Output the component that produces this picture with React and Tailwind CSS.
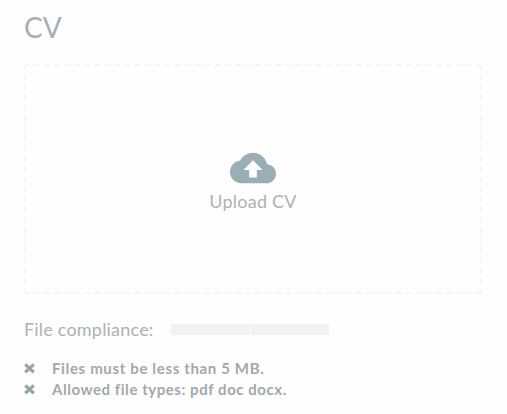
const rules = [
  { text: 'Files must be less than 5 MB.', spacing: 'tracking-[0.65px]' },
  { text: 'Allowed file types: pdf doc docx.', spacing: 'tracking-[0.55px]' },
];

function Cross() {
  return (
    <svg viewBox="0 0 11 11" className="h-[11px] w-[11px] shrink-0" fill="none" stroke="#93a5ad" strokeWidth="3.2">
      <path d="M1.2 1.4 9.8 9.2M9.8 1.4 1.2 9.2" />
    </svg>
  );
}

export default function App() {
  return (
    <main className="h-[414px] w-[507px] overflow-hidden bg-[#fefefe] pl-6 pt-[9px] font-['Lato',sans-serif] text-[#abb2b6]">
      <h1 className="h-[55px] text-[28px] font-normal leading-[36px] tracking-[0.1px] text-[#a7aeb4]">CV</h1>
      <button className="flex h-[230px] w-[458px] flex-col items-center border-2 border-dashed border-[#f5f5f6] pt-[79px]">
        <svg viewBox="0 0 24 24" className="h-[46px] w-[46px]" fill="#9badb5">
          <path d="M19.35 10.04C18.67 6.59 15.64 4 12 4 9.11 4 6.6 5.64 5.35 8.04 2.34 8.36 0 10.91 0 14c0 3.31 2.69 6 6 6h13c2.76 0 5-2.24 5-5 0-2.64-2.05-4.78-4.65-4.96zM14 13v4h-4v-4H7l5-5 5 5h-3z" />
        </svg>
        <span className="-mt-px text-[18px] leading-[22px] tracking-[0.25px]">Upload CV</span>
      </button>
      <div className="mt-[24px] flex h-[22px] items-center">
        <span className="w-[147px] whitespace-nowrap text-[18px] leading-[22px] tracking-[0.2px]">File compliance:</span>
        <div className="flex gap-px">
          <i className="h-[11px] w-[79px] bg-[#f2f2f4]" />
          <i className="h-[11px] w-[78px] bg-[#f2f2f4]" />
        </div>
      </div>
      <ul className="mt-[18px] text-[15px] font-bold leading-[21px] text-[#a1a9ac]">
        {rules.map(({ text, spacing }) => (
          <li key={text} className="flex h-[21px] items-center gap-[17px]">
            <Cross />
            <span className={`whitespace-nowrap ${spacing}`}>{text}</span>
          </li>
        ))}
      </ul>
    </main>
  );
}
